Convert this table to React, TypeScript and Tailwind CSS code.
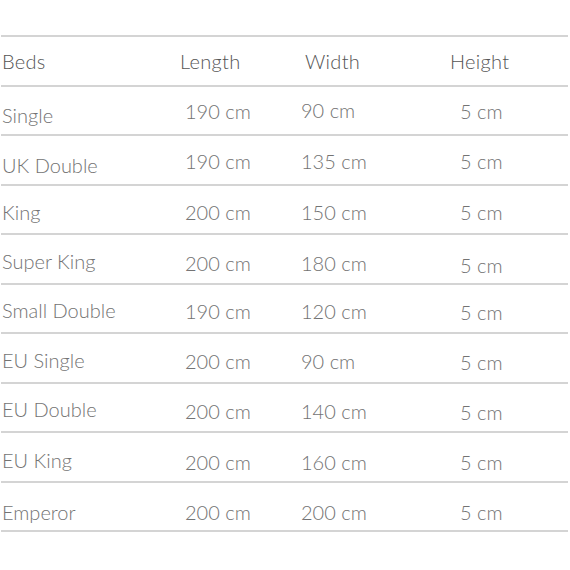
import React from 'react';

type Row = { bed: string; length: string; width: string; height: string; nudge: [string, string, string, string] };

const rows: Row[] = [
  { bed: 'Single', length: '190 cm', width: '90 cm', height: '5 cm', nudge: ['pt-[9px]', 'pt-[1px]', 'pt-0', 'pt-[1px]'] },
  { bed: 'UK Double', length: '190 cm', width: '135 cm', height: '5 cm', nudge: ['pt-[11px]', 'pt-[3px]', 'pt-[3px]', 'pt-[3px]'] },
  { bed: 'King', length: '200 cm', width: '150 cm', height: '5 cm', nudge: ['pt-[6px]', 'pt-[6px]', 'pt-[6px]', 'pt-[6px]'] },
  { bed: 'Super King', length: '200 cm', width: '180 cm', height: '5 cm', nudge: ['pt-[5px]', 'pt-[9px]', 'pt-[9px]', 'pt-[13px]'] },
  { bed: 'Small Double', length: '190 cm', width: '120 cm', height: '5 cm', nudge: ['pt-[3px]', 'pt-[5px]', 'pt-[5px]', 'pt-[7px]'] },
  { bed: 'EU Single', length: '200 cm', width: '90 cm', height: '5 cm', nudge: ['pt-[4px]', 'pt-[6px]', 'pt-[6px]', 'pt-[8px]'] },
  { bed: 'EU Double', length: '200 cm', width: '140 cm', height: '5 cm', nudge: ['pt-[3px]', 'pt-[7px]', 'pt-[7px]', 'pt-[9px]'] },
  { bed: 'EU King', length: '200 cm', width: '160 cm', height: '5 cm', nudge: ['pt-[6px]', 'pt-[10px]', 'pt-[10px]', 'pt-[10px]'] },
  { bed: 'Emperor', length: '200 cm', width: '200 cm', height: '5 cm', nudge: ['pt-[12px]', 'pt-[12px]', 'pt-[12px]', 'pt-[12px]'] },
];

const rowCls = 'grid grid-cols-[169px_120px_140px_138px] h-[49.5px] border-b-2 border-[#d4d4d4]';

export default function App() {
  return (
    <div className="min-h-[570px] bg-white pt-[35px] font-['Lato','Open_Sans',sans-serif] font-light text-[20px]">
      <div className="ml-[1px] w-[567px] border-t-2 border-[#d4d4d4]">
        <div className={`${rowCls} text-[#555] tracking-[0.3px]`}>
          <div className="flex items-center pl-[1px]">Beds</div>
          <div className="flex items-center pl-[10px]">Length</div>
          <div className="flex items-center pl-[15px]">Width</div>
          <div className="flex items-center pl-[20px]">Height</div>
        </div>
        {rows.map(r => (
          <div key={r.bed} className={`${rowCls} text-[#737373]`}>
            <div className={`flex items-center pl-[1px] ${r.nudge[0]}`}>{r.bed}</div>
            <div className={`flex items-center pl-[15px] ${r.nudge[1]}`}>{r.length}</div>
            <div className={`flex items-center pl-[11px] ${r.nudge[2]}`}>{r.width}</div>
            <div className={`flex items-center pl-[30px] ${r.nudge[3]}`}>{r.height}</div>
          </div>
        ))}
      </div>
    </div>
  );
}
